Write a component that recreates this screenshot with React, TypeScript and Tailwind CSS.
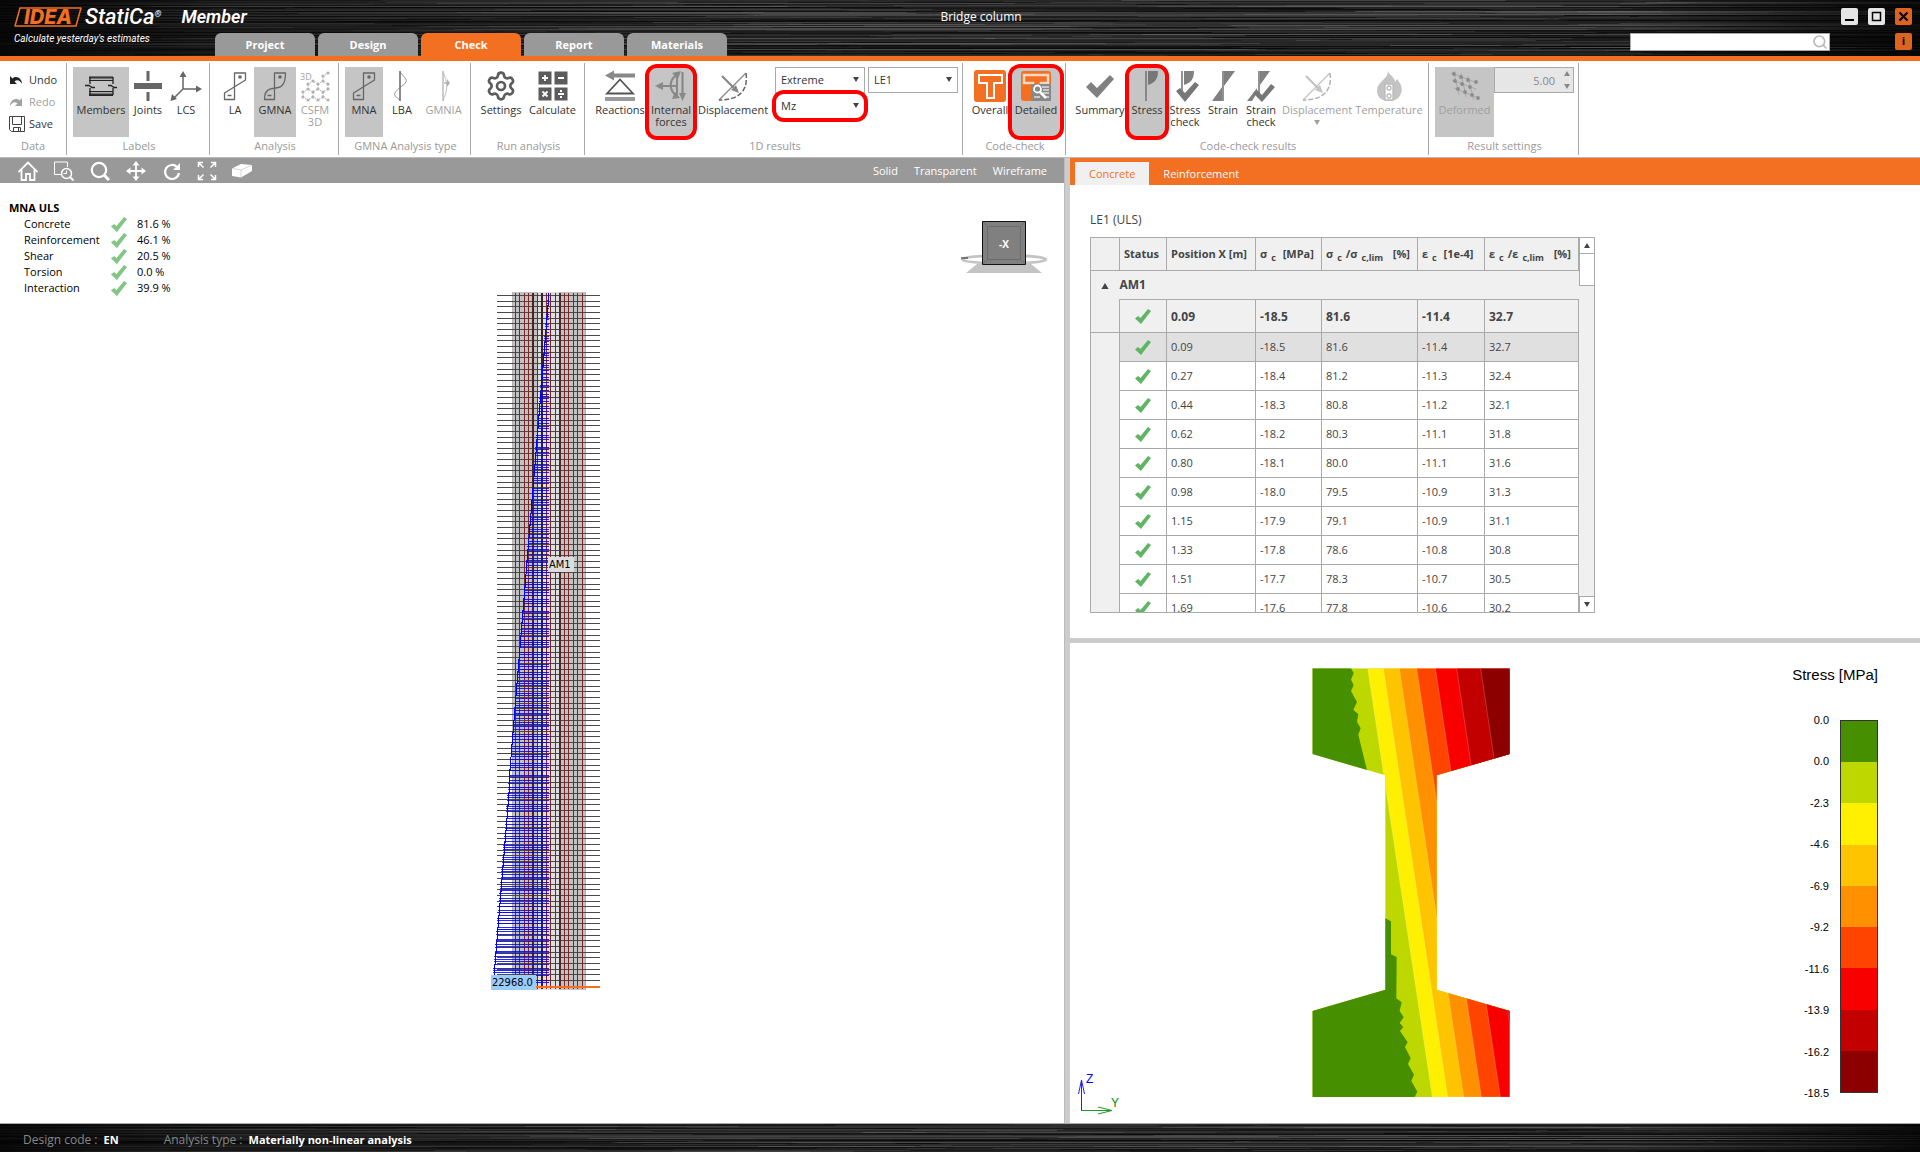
import React, { useState } from 'react';
import { Search, Settings } from 'lucide-react';
import clsx from 'clsx';

interface RibbonItem {
  id: string;
  label: string;
  icon: React.ReactNode;
  width: string;
  active?: boolean;
  disabled?: boolean;
  marked?: boolean;
  caret?: boolean;
}

const TABS = ['Project', 'Design', 'Check', 'Report', 'Materials'];

const CHECKS = [
  { name: 'Concrete', value: '81.6 %' },
  { name: 'Reinforcement', value: '46.1 %' },
  { name: 'Shear', value: '20.5 %' },
  { name: 'Torsion', value: '0.0 %' },
  { name: 'Interaction', value: '39.9 %' },
];

const ROWS = [
  ['0.09', '-18.5', '81.6', '-11.4', '32.7'],
  ['0.27', '-18.4', '81.2', '-11.3', '32.4'],
  ['0.44', '-18.3', '80.8', '-11.2', '32.1'],
  ['0.62', '-18.2', '80.3', '-11.1', '31.8'],
  ['0.80', '-18.1', '80.0', '-11.1', '31.6'],
  ['0.98', '-18.0', '79.5', '-10.9', '31.3'],
  ['1.15', '-17.9', '79.1', '-10.9', '31.1'],
  ['1.33', '-17.8', '78.6', '-10.8', '30.8'],
  ['1.51', '-17.7', '78.3', '-10.7', '30.5'],
  ['1.69', '-17.6', '77.8', '-10.6', '30.2'],
];

const LEGEND_LABELS = ['0.0', '0.0', '-2.3', '-4.6', '-6.9', '-9.2', '-11.6', '-13.9', '-16.2', '-18.5'];
const LEGEND_COLORS = ['#458f00', '#bcd800', '#ffef00', '#ffc400', '#ff9000', '#ff4400', '#f80000', '#c30000', '#8c0000'];

// small deterministic generator so the brushed texture is the same on each render
function makeRandom(seed: number) {
  let s = seed;
  return () => {
    s = (s * 16807) % 2147483647;
    return s / 2147483647;
  };
}

function BrushedMetal({ seed, rows }: { seed: number; rows: number }) {
  const rnd = makeRandom(seed);
  const lines: React.ReactNode[] = [];
  for (let y = 0; y < rows; y++) {
    for (let k = 0; k < 6; k++) {
      const x = rnd() * 1900 - 200;
      const w = 250 + rnd() * 900;
      const light = rnd() > 0.45;
      lines.push(
        <rect
          key={`${y}-${k}`}
          x={x}
          y={y}
          width={w}
          height={1}
          fill={light ? '#ffffff' : '#000000'}
          opacity={light ? 0.03 + rnd() * 0.1 : 0.2 + rnd() * 0.3}
        />
      );
    }
  }
  return (
    <svg className="absolute inset-0 w-full h-full" viewBox={`0 0 1920 ${rows}`} preserveAspectRatio="none" aria-hidden="true">
      <defs>
        <linearGradient id={`shade${seed}`}>
          <stop offset="0" stopColor="#000" stopOpacity="0.8" />
          <stop offset="0.12" stopColor="#000" stopOpacity="0.3" />
          <stop offset="0.4" stopColor="#000" stopOpacity="0" />
          <stop offset="0.85" stopColor="#000" stopOpacity="0.1" />
          <stop offset="1" stopColor="#000" stopOpacity="0.8" />
        </linearGradient>
      </defs>
      <rect width="1920" height={rows} fill="#262626" />
      {lines}
      <rect width="1920" height={rows} fill={`url(#shade${seed})`} />
    </svg>
  );
}

/* ---------- ribbon icons ---------- */

function Ico({ children }: { children: React.ReactNode }) {
  return (
    <svg width="32" height="32" viewBox="0 0 32 32" fill="none" stroke="#666" strokeWidth="1.3" aria-hidden="true">
      {children}
    </svg>
  );
}

const MembersIcon = (
  <Ico>
    <path d="M4 7.5h24M4 25h24" stroke="#222" strokeWidth="2" />
    <path d="M4 10.5h24M4 21.5h24" stroke="#222" strokeWidth="1.2" />
    <path d="M4 8.5h24M4 23.500h24" stroke="#777" />
    <path d="M5 7v7M5 18v7M28 7v7M28 18v7" stroke="#222" />
    <path d="M0 15.500h4l3 2h3M23 15.500h3l3 2h3" stroke="#222" />
  </Ico>
);

const JointsIcon = (
  <Ico>
    <path d="M2 13h28v6H2zM14.500 1h3v10h-3zM14.500 22h3v9h-3z" fill="#666" stroke="none" />
  </Ico>
);

const LcsIcon = (
  <Ico>
    <path d="M13 5v14h14M13 19 3 29" strokeWidth="1.500" />
    <path d="M13 1l3.500 6h-7zM32 19l-6 3.500v-7zM0.500 31l1.500-7 5 5z" fill="#666" stroke="none" />
  </Ico>
);

const LinearIcon = (
  <Ico>
    <path d="M15.500 3h11v7L5.500 23v6.500h10zM15.500 3v27" strokeLinejoin="round" />
    <circle cx="21" cy="7" r="1.800" fill="#666" stroke="none" />
    <path d="M8.500 25.500h4" strokeWidth="1.500" />
  </Ico>
);

const CurvedIcon = (
  <Ico>
    <path d="M15.500 3h11c0 18-10 14-15 16-5 1-6 5-6 10.500h10V3z" strokeLinejoin="round" />
    <circle cx="21" cy="7" r="1.800" fill="#666" stroke="none" />
    <path d="M8.500 25.500h4" strokeWidth="1.500" />
  </Ico>
);

const CsfmIcon = (
  <Ico>
    <path
      d="M4 22l5-3 5 3 5-3 5 3 5-3M4 22v5l5 3 5-3v-5M14 27l5 3 5-3v-5M24 27l5 3M9 19v-5l5-3 5 3v5M19 14l5-3 5 3v5M24 11V6l5-3"
      strokeDasharray="1 1.500"
    />
    {[[4, 22], [4, 27], [9, 30], [14, 27], [14, 22], [19, 30], [24, 27], [24, 22], [29, 30], [9, 19], [9, 14], [14, 11], [19, 14], [19, 19], [24, 11], [29, 14], [29, 19], [24, 6], [29, 3]].map(([x, y]) => (
      <circle key={`${x}-${y}`} cx={x} cy={y} r="1.600" fill="#666" stroke="none" />
    ))}
    <text x="1" y="10" fontSize="9" fill="#444" stroke="none">3D</text>
  </Ico>
);

const LbaIcon = (
  <Ico>
    <path d="M14 1v30" strokeWidth="1.500" />
    <path d="M14 2c8 9 8 9 2 14-10 8-9 9-2 14" strokeWidth="0.700" />
  </Ico>
);

const GmniaIcon = (
  <Ico>
    <path d="M15 1v30" />
    <path d="M15 2c5 11 5 18 0 28" strokeWidth="0.800" />
    <path d="M16 13h4" />
    <path d="M19 9v8l3-4z" fill="#666" stroke="none" />
  </Ico>
);

const CalculateIcon = (
  <Ico>
    <path d="M1.500 1.500h13v13h-13zM17.500 1.500h13v13h-13zM1.500 17.500h13v13h-13zM17.500 17.500h13v13h-13z" fill="#5c5c5c" stroke="none" />
    <path d="M5 8h6M8 5v6M21 8h6M5.500 21.500l5 5M10.500 21.500l-5 5M21 24h6" stroke="#fff" strokeWidth="1.800" />
    <path d="M23 20h2v2h-2zM23 26h2v2h-2z" fill="#fff" stroke="none" />
  </Ico>
);

const ReactionsIcon = (
  <Ico>
    <path d="M1 5.500l9-5v3h21v4H10v3z" fill="#888" stroke="none" />
    <path d="M16 9.500 3 23.500h26z" stroke="#555" strokeWidth="1.800" />
    <path d="M1 27h30v4H1z" fill="#999" stroke="none" />
  </Ico>
);

const ForcesIcon = (
  <Ico>
    <path d="M6 16h9M27.500 2v22" stroke="#888" strokeWidth="2.200" />
    <path d="M22 5c-8 4-9 16 1 22M22 5v22M15 16h7" stroke="#888" strokeWidth="2" />
    <path d="M0 16l8-4v8zM26 1l-3 8-6-6zM31 23l-3.500 8-3.500-8zM17 29l3-7 5 6z" fill="#888" stroke="none" />
  </Ico>
);

const DisplacementIcon = (
  <Ico>
    <path d="M2 30 29 3" strokeWidth="1.200" stroke="#888" />
    <path d="M29 3c2 14-3 27-27 27" strokeDasharray="5 2" strokeWidth="1.500" />
    <path d="M5 6l12 12" stroke="#888" strokeWidth="2.200" />
    <path d="M22 23l-8-3 5-5z" fill="#888" stroke="none" />
  </Ico>
);

const SummaryIcon = (
  <Ico>
    <path d="M2 17l5-5 6 6L26 5l4 4-17 19z" fill="#808080" stroke="none" />
  </Ico>
);

const StressIcon = (
  <Ico>
    <path d="M15 1v30" stroke="#777" strokeWidth="1.600" />
    <path d="M17 1h10c0 9-4 12-10 14z" fill="#777" stroke="none" />
  </Ico>
);

const StressCheckIcon = (
  <Ico>
    <path d="M13 1v24" stroke="#777" strokeWidth="1.600" />
    <path d="M15 1h10c0 9-4 12-10 14z" fill="#808080" stroke="none" />
    <path d="M7 21l4-3 5 5 10-11 4 3-14 17z" fill="#777" stroke="none" />
  </Ico>
);

const StrainIcon = (
  <Ico>
    <path d="M16 1v30" stroke="#777" strokeWidth="1.600" />
    <path d="M17 1h11L17 16zM15 17v14H5z" fill="#808080" stroke="none" />
  </Ico>
);

const StrainCheckIcon = (
  <Ico>
    <path d="M14 1v24" stroke="#777" strokeWidth="1.600" />
    <path d="M15 1h10L15 15zM12 18v5l-5 8H2z" fill="#808080" stroke="none" />
    <path d="M8 23l4-3 5 5 9-11 4 3-13 15z" fill="#777" stroke="none" />
  </Ico>
);

const TemperatureIcon = (
  <Ico>
    <path
      d="M15 1c2 5 7 6 7 11l2-3c4 5 6 9 4 14-1 5-6 8-12 8S4 28 4 21c0-5 3-8 6-11 3-3 5-5 5-9z"
      fill="#888"
      stroke="none"
    />
    <path d="M12 14h8v16h-8z" fill="#fff" stroke="#777" />
    <circle cx="16" cy="18" r="2" stroke="#777" />
    <circle cx="16" cy="26" r="2" stroke="#777" />
  </Ico>
);

const DeformedIcon = (
  <Ico>
    <path d="M5 1c2 12 3 15 5 24M12 3c2 10 3 13 5 24M19 6c2 9 3 13 6 24M2 3l24 9M3 10l24 9M5 18l24 10" strokeWidth="0.600" />
    {[[5, 4], [12, 7], [19, 10], [6, 11], [13, 14], [21, 17], [9, 19], [16, 22], [23, 25], [27, 12], [29, 28]].map(([x, y]) => (
      <circle key={`${x}-${y}`} cx={x} cy={y} r="1.900" fill="#555" stroke="none" />
    ))}
  </Ico>
);

const OverallIcon = (
  <Ico>
    <rect width="32" height="32" rx="3" fill="#f36f21" stroke="none" />
    <path d="M5 5h23v8h-8v15h-7V13H5z" stroke="#fff" strokeWidth="2" />
  </Ico>
);

const DetailedIcon = (
  <Ico>
    <rect x="1" y="1" width="30" height="30" rx="3" fill="#f36f21" stroke="none" />
    <path d="M4 5h24v8h-7v10h-8V13H4z" stroke="#f6d8c6" strokeWidth="2.500" />
    <rect x="11" y="14" width="20" height="17" fill="#888" stroke="none" />
    <path d="M22 17h7M23 20h6M23 23h6M14 27h6M25 27h4" stroke="#ddd" />
    <circle cx="17.500" cy="19" r="3.500" stroke="#fff" strokeWidth="1.800" />
    <path d="M20 22l6 6" stroke="#fff" strokeWidth="2.500" />
  </Ico>
);

const GROUPS: { title: string; items: RibbonItem[] }[] = [
  {
    title: 'Labels',
    items: [
      { id: 'members', label: 'Members', icon: MembersIcon, width: 'w-14', active: true },
      { id: 'joints', label: 'Joints', icon: JointsIcon, width: 'w-[38px]' },
      { id: 'lcs', label: 'LCS', icon: LcsIcon, width: 'w-[38px]' },
    ],
  },
  {
    title: 'Analysis',
    items: [
      { id: 'la', label: 'LA', icon: LinearIcon, width: 'w-[38px]' },
      { id: 'gmna', label: 'GMNA', icon: CurvedIcon, width: 'w-[42px]', active: true },
      { id: 'csfm', label: 'CSFM 3D', icon: CsfmIcon, width: 'w-[38px]', disabled: true },
    ],
  },
  {
    title: 'GMNA Analysis type',
    items: [
      { id: 'mna', label: 'MNA', icon: LinearIcon, width: 'w-[38px]', active: true },
      { id: 'lba', label: 'LBA', icon: LbaIcon, width: 'w-[38px]' },
      { id: 'gmnia', label: 'GMNIA', icon: GmniaIcon, width: 'w-[45px]', disabled: true },
    ],
  },
  {
    title: 'Run analysis',
    items: [
      { id: 'settings', label: 'Settings', icon: <Settings size={32} strokeWidth={2} color="#5c5c5c" />, width: 'w-12' },
      { id: 'calculate', label: 'Calculate', icon: CalculateIcon, width: 'w-[55px]' },
    ],
  },
];

const RESULT_ITEMS: RibbonItem[] = [
  { id: 'reactions', label: 'Reactions', icon: ReactionsIcon, width: 'w-14' },
  { id: 'forces', label: 'Internal forces', icon: ForcesIcon, width: 'w-[46px]', active: true, marked: true },
  { id: 'displacement', label: 'Displacement', icon: DisplacementIcon, width: 'w-[78px]' },
];

const CODE_ITEMS: RibbonItem[] = [
  { id: 'overall', label: 'Overall', icon: OverallIcon, width: 'w-[42px]' },
  { id: 'detailed', label: 'Detailed', icon: DetailedIcon, width: 'w-[50px]', active: true, marked: true },
];

const CHECK_ITEMS: RibbonItem[] = [
  { id: 'summary', label: 'Summary', icon: SummaryIcon, width: 'w-14' },
  { id: 'stress', label: 'Stress', icon: StressIcon, width: 'w-[38px]', active: true, marked: true },
  { id: 'stress-check', label: 'Stress check', icon: StressCheckIcon, width: 'w-[38px]' },
  { id: 'strain', label: 'Strain', icon: StrainIcon, width: 'w-[38px]' },
  { id: 'strain-check', label: 'Strain check', icon: StrainCheckIcon, width: 'w-[38px]' },
  { id: 'cc-displacement', label: 'Displacement', icon: DisplacementIcon, width: 'w-[74px]', disabled: true, caret: true },
  { id: 'temperature', label: 'Temperature', icon: TemperatureIcon, width: 'w-[70px]', disabled: true },
];

function RedMark() {
  return <span className="pointer-events-none absolute -inset-[3px] z-10 rounded-xl border-4 border-[#ff0000]" />;
}

function RibbonButton({ item }: { item: RibbonItem }) {
  return (
    <button
      type="button"
      disabled={item.disabled}
      className={clsx(
        'relative flex h-[70px] shrink-0 flex-col items-center pt-[3px]',
        item.width,
        item.active && 'bg-[#c5c5c5]'
      )}
    >
      <span className={clsx('h-8', item.disabled && 'opacity-50')}>{item.icon}</span>
      <span className={clsx('mt-0.5 whitespace-nowrap text-center leading-3', item.disabled ? 'text-[#a0a0a0]' : 'text-[#333]')}>
        {item.label.split(' ').map(part => <span key={part} className="block">{part}</span>)}
      </span>
      {item.caret && <Caret className="mt-1 text-[#a0a0a0]" />}
      {item.marked && <RedMark />}
    </button>
  );
}

function Group({ title, children, className }: { title: string; children: React.ReactNode; className?: string }) {
  return (
    <section className={clsx('flex h-[92px] shrink-0 flex-col justify-between border-r border-[#aaa] pb-px pt-1', className ?? 'pl-1.5 pr-1')}>
      <div className="flex">{children}</div>
      <h2 className="text-center leading-4 text-[#999]">{title}</h2>
    </section>
  );
}

function Caret({ up, className }: { up?: boolean; className?: string }) {
  return (
    <svg width="6" height="5" viewBox="0 0 6 5" className={className} aria-hidden="true">
      <path d={up ? 'M0 5h6L3 0z' : 'M0 0h6L3 5z'} fill="currentColor" />
    </svg>
  );
}

function Dropdown({ label, options, marked }: { label: string; options: string[]; marked?: boolean }) {
  return (
    <div className="relative h-[26px] w-[90px]">
      <select aria-label={label} className="h-full w-full appearance-none border border-[#aaa] bg-white pl-[5px] pr-4 text-[#333] outline-none">
        {options.map(o => <option key={o}>{o}</option>)}
      </select>
      <Caret className="pointer-events-none absolute right-1.5 top-2.5 text-[#444]" />
      {marked && <RedMark />}
    </div>
  );
}

function Header({ tab, onTab }: { tab: string; onTab: (t: string) => void }) {
  return (
    <header className="relative border-b-[5px] border-[#f36f21] bg-[#111] text-white">
      <BrushedMetal seed={77} rows={56} />
      <div className="relative flex h-[33px]">
        <div className="flex w-[300px] items-center pl-3.5 font-[Roboto] italic">
          <div className="relative mr-[3px] h-5 w-[68px] text-center">
            <svg className="absolute inset-0" width="68" height="20" viewBox="0 0 68 20" fill="none" aria-hidden="true">
              <path d="M6 1h61l-5 18H1z" stroke="#f36f21" strokeWidth="1.500" strokeLinejoin="round" />
            </svg>
            <span className="relative font-[Inter] text-xl font-extrabold leading-5 text-[#f36f21]">IDEA</span>
          </div>
          <span className="text-[22px] font-medium leading-5">StatiCa</span>
          <span className="self-start pt-2 text-[9px] leading-3">®</span>
          <span className="pl-5 text-lg font-semibold leading-5">Member</span>
        </div>
        <h1 className="flex-1 pl-6 pt-[9px] text-center text-xs leading-4">Bridge column</h1>
        <div className="flex w-[282px] justify-end gap-2.5 pr-2 pt-2">
          <button type="button" aria-label="Minimize" className="flex size-[17px] justify-center rounded-xs bg-[#e6e6e6]">
            <svg width="17" height="17"><path d="M4 12h9" stroke="#000" strokeWidth="2" /></svg>
          </button>
          <button type="button" aria-label="Maximize" className="flex size-[17px] justify-center rounded-xs bg-[#e6e6e6]">
            <svg width="17" height="17"><path d="M4.500 4.500h8v8h-8z" fill="none" stroke="#000" strokeWidth="1.500" /></svg>
          </button>
          <button type="button" aria-label="Close" className="flex size-[17px] justify-center rounded-xs bg-[#dc6420]">
            <svg width="17" height="17"><path d="M4.500 4.500l8 8M12.500 4.500l-8 8" stroke="#000" strokeWidth="2" /></svg>
          </button>
        </div>
      </div>
      <div className="relative flex h-[23px]">
        <p className="w-[215px] pl-3.5 font-[Roboto] text-[10px] italic leading-3">Calculate yesterday&apos;s estimates</p>
        <nav className="flex gap-[3px]">
          {TABS.map(t => (
            <button
              key={t}
              type="button"
              onClick={() => onTab(t)}
              className={clsx('w-[100px] rounded-t-md pt-0.5 font-bold', t === tab ? 'bg-[#f36f21]' : 'bg-[#999]')}
            >
              {t}
            </button>
          ))}
        </nav>
        <div className="relative ml-auto mr-[65px] h-[18px] w-[200px]">
          <input type="search" aria-label="Search" className="h-full w-full border border-[#aaa] bg-white px-1 text-black outline-none" />
          <Search size={16} color="#bbb" strokeWidth={2.5} className="absolute right-0.5 top-px" />
        </div>
        <button type="button" aria-label="Info" className="mr-2 flex size-[17px] items-center justify-center rounded-xs bg-[#dc6420] font-bold text-black">
          i
        </button>
      </div>
    </header>
  );
}

function Ribbon() {
  return (
    <div className="flex border-b border-[#bbb] pb-0.5 pt-0.5">
      <section className="flex h-[92px] w-[67px] shrink-0 flex-col justify-between border-r border-[#aaa] pb-px pl-[9px] pt-1.5 text-[#333]">
        <div className="flex flex-col">
          <button type="button" className="flex h-[22px] items-center gap-1.5">
            <svg width="14" height="12" viewBox="0 0 14 12"><path d="M1 2v8h7L5.500 7.500C8 5 11 6 13 10c0-6-6-9-9.500-5.500z" fill="#222" /></svg>
            Undo
          </button>
          <button type="button" disabled className="flex h-[22px] items-center gap-1.5 text-[#a0a0a0]">
            <svg width="14" height="12" viewBox="0 0 14 12"><path d="M13 2v8H6l2.500-2.500C6 5 3 6 1 10c0-6 6-9 9.500-5.500z" fill="#a0a0a0" /></svg>
            Redo
          </button>
          <button type="button" className="flex h-[22px] items-center gap-1">
            <svg width="16" height="16" viewBox="0 0 16 16" fill="none" stroke="#444"><path d="M.500.500h15v15h-13l-2-2zM3.500.500v8h9v-8M4.500 15.500v-4h7v4M9.500 12v3.500" /></svg>
            Save
          </button>
        </div>
        <h2 className="-ml-[9px] text-center leading-4 text-[#999]">Data</h2>
      </section>

      {GROUPS.map(g => (
        <Group key={g.title} title={g.title}>
          {g.items.map(i => <RibbonButton key={i.id} item={i} />)}
        </Group>
      ))}

      <Group title="1D results" className="pl-[7px] pr-1">
        {RESULT_ITEMS.map(i => <RibbonButton key={i.id} item={i} />)}
        <div className="ml-[3px] grid grid-cols-2 content-start gap-x-[3px]">
          <Dropdown label="Result location" options={['Extreme', 'Section']} />
          <Dropdown label="Load effect" options={['LE1', 'LE2']} />
          <Dropdown label="Internal force" options={['Mz', 'My', 'N', 'Vy', 'Vz']} marked />
        </div>
      </Group>

      <Group title="Code-check">
        {CODE_ITEMS.map(i => <RibbonButton key={i.id} item={i} />)}
      </Group>

      <Group title="Code-check results">
        {CHECK_ITEMS.map(i => <RibbonButton key={i.id} item={i} />)}
      </Group>

      <Group title="Result settings">
        <RibbonButton item={{ id: 'deformed', label: 'Deformed', icon: DeformedIcon, width: 'w-[59px]', active: true, disabled: true }} />
        <div className="relative h-[26px] w-20">
          <input aria-label="Deformation scale" disabled defaultValue="5.00" className="h-full w-full border border-[#aaa] bg-[#e6e6e6] pr-[18px] text-right text-[#888]" />
          <Caret up className="absolute right-1 top-1 text-[#888]" />
          <Caret className="absolute bottom-1 right-1 text-[#888]" />
        </div>
      </Group>
    </div>
  );
}

function ViewToolbar() {
  const cls = 'flex h-6 w-9 items-center justify-center';
  return (
    <div className="flex h-[25px] items-center bg-[#999] pl-2.5 pr-[17px] pt-px text-white">
      <button type="button" aria-label="Home" className={cls}>
        <svg width="20" height="20" viewBox="0 0 20 20" fill="none" stroke="#fff" strokeWidth="1.800"><path d="M.500 11 10 1.500 19.500 11M3.500 9v10h4.500v-6h4v6h4.500V9" /></svg>
      </button>
      <button type="button" aria-label="Zoom window" className={cls}>
        <svg width="20" height="20" viewBox="0 0 20 20" fill="none" stroke="#fff"><path d="M7 13.500H.500V1h13v5" /><circle cx="12.500" cy="12.500" r="5" strokeWidth="1.500" /><path d="M16 16l3.500 3.500" strokeWidth="2" /><path d="M12.500 9.500v3h-3" /></svg>
      </button>
      <button type="button" aria-label="Zoom" className={cls}>
        <svg width="20" height="20" viewBox="0 0 20 20" fill="none" stroke="#fff"><circle cx="9" cy="9" r="7.200" strokeWidth="2.200" /><path d="M14 14l5 5" strokeWidth="3" /></svg>
      </button>
      <button type="button" aria-label="Pan" className={cls}>
        <svg width="20" height="20" viewBox="0 0 20 20" fill="#fff" stroke="#fff"><path d="M10 3v14M3 10h14" strokeWidth="1.800" /><path d="M10 0l3.500 4.500h-7zM10 20l3.500-4.500h-7zM0 10l4.500-3.500v7zM20 10l-4.500-3.500v7z" stroke="none" /></svg>
      </button>
      <button type="button" aria-label="Rotate" className={cls}>
        <svg width="20" height="20" viewBox="0 0 20 20" fill="none" stroke="#fff"><path d="M15 6a7 7 0 1 0 2 6" strokeWidth="2.200" /><path d="M18 2v7h-7z" fill="#fff" stroke="none" /></svg>
      </button>
      <button type="button" aria-label="Zoom all" className="flex h-6 w-[34px] items-center justify-center">
        <svg width="20" height="20" viewBox="0 0 20 20" fill="none" stroke="#fff" strokeWidth="1.500"><path d="M6 1.500H1.500V6M1.500 1.500l5 5M14 1.500h4.500V6M18.500 1.500l-5 5M6 18.500H1.500V14M1.500 18.500l5-5M14 18.500h4.500V14M18.500 18.500l-5-5" /></svg>
      </button>
      <button type="button" aria-label="View solid" className={cls}>
        <svg width="20" height="14" viewBox="0 0 20 14"><path d="M0 4.500 9 0l11 1v6L9 13.500 0 12z" fill="#fff" /><path d="M0 4.500l9 1.500 11-5M9 6v7.500" fill="none" stroke="#bbb" strokeWidth="0.600" /></svg>
      </button>
      <div className="ml-auto flex gap-4">
        <button type="button">Solid</button>
        <button type="button">Transparent</button>
        <button type="button">Wireframe</button>
      </div>
    </div>
  );
}

function Tick({ color }: { color: string }) {
  return (
    <svg width="16" height="15" viewBox="0 0 16 15" aria-hidden="true">
      <path d="M0 9.500 3 7l2.500 2L13 0l3 2L6 15z" fill={color} />
    </svg>
  );
}

// column elevation: stirrups, rebars and the moment diagram
function MemberDrawing() {
  const stirrups = Array.from({ length: 123 }, (_, i) => Math.round(295 + i * 5.66));
  const rebars = [515, 519, 524, 528, 537, 546, 550, 555, 564, 568, 573, 577, 582];
  const edge = (y: number) => Math.round(548 - ((y - 292) / 681) * 55);
  const gaps = [3, 3, 2, 3, 4, 2, 2, 3, 5, 2, 3, 3, 4, 2];
  const forceLines: number[] = [];
  for (let y = 297, i = 0; y < 985; i++) {
    forceLines.push(y);
    y += gaps[i % gaps.length];
  }
  const steps = Array.from({ length: 56 }, (_, i) => 293 + i * 12.2);
  return (
    <svg width="144" height="702" viewBox="460 290 144 702" shapeRendering="crispEdges" role="img" aria-label="Column elevation">
      <rect x="512" y="292" width="74" height="698" fill="#c2c2c2" />
      <rect x="538" y="292" width="21" height="698" fill="#dedede" />
      <rect x="512" y="292" width="1" height="698" fill="#b0b0b0" />
      <rect x="585" y="292" width="1" height="698" fill="#b0b0b0" />
      {stirrups.map(y => <rect key={y} x="497" y={y} width="103" height="1" fill="#4a4a4a" />)}
      {rebars.map(x => <rect key={x} x={x} y="293" width="1" height="696" fill="#7a2424" />)}
      <rect x="532" y="293" width="2" height="696" fill="#4d2222" />
      <rect x="541" y="293" width="2" height="696" fill="#3d2020" />
      <rect x="559" y="293" width="2" height="696" fill="#4d2a2a" />
      {forceLines.map(y => <rect key={y} x={edge(y)} y={y} width={549 - edge(y)} height="1" fill="#0000ff" opacity="0.85" />)}
      {steps.map(y => <rect key={y} x={edge(y)} y={y} width="1" height="13" fill="#0000ff" />)}
      <rect x="536" y="986" width="64" height="2" fill="#f36f21" />
      <g fontFamily="'DejaVu Sans Condensed', 'DejaVu Sans', sans-serif" fontSize="11" fill="#000">
        <rect x="548" y="557" width="26" height="15" fill="#dcdcdc" />
        <text x="549" y="568">AM1</text>
        <rect x="491" y="975" width="45" height="15" fill="#99ccff" />
        <text x="492" y="986">22968.0</text>
      </g>
    </svg>
  );
}

function ViewCube() {
  return (
    <svg width="88" height="56" viewBox="0 0 88 56" className="absolute right-4 top-[37px]" role="img" aria-label="View cube">
      <path d="M17 44h54l11 9H6z" fill="#c4c4c4" />
      <ellipse cx="44" cy="39.500" rx="42" ry="4" fill="none" stroke="#c4c4c4" strokeWidth="2.500" />
      <path d="M1 38h7" stroke="#222" />
      <rect x="22.500" y="1.500" width="43" height="43" fill="#808080" stroke="#111" />
      <path d="M27.500 6.500h33v33h-33zM22.500 1.500l5 5M65.500 1.500l-5 5M22.500 44.500l5-5M65.500 44.500l-5-5" fill="none" stroke="#6c6c6c" />
      <text x="44" y="28" textAnchor="middle" fontSize="10" fontWeight="700" fill="#fff">-X</text>
    </svg>
  );
}

function ModelView() {
  return (
    <div className="flex min-w-0 flex-col">
      <ViewToolbar />
      <div className="relative flex flex-1 items-start justify-center pt-[107px]">
        <div className="absolute left-[9px] top-[17px] leading-4 text-black">
          <h2 className="font-bold">MNA ULS</h2>
          <ul className="pl-[15px]">
            {CHECKS.map(c => (
              <li key={c.name} className="flex items-center">
                <span className="w-[87px]">{c.name}</span>
                <Tick color="#82c585" />
                <span className="pl-2.5">{c.value}</span>
              </li>
            ))}
          </ul>
        </div>
        <ViewCube />
        <MemberDrawing />
      </div>
    </div>
  );
}

const Sub = ({ children }: { children: React.ReactNode }) => (
  <span className="relative top-[3px] px-1 text-[9px]">{children}</span>
);

const CELL = 'border border-[#aaa] px-1 pt-px';

function ResultTable() {
  return (
    <div className="flex h-[376px] w-[505px] overflow-hidden border border-[#aaa] text-[#444]">
      <div className="flex-1 overflow-hidden">
        <table className="-ml-px -mt-px w-[489px] table-fixed border-collapse">
          <colgroup>
            <col className="w-[29px]" />
            <col className="w-[47px]" />
            <col className="w-[89px]" />
            <col className="w-[66px]" />
            <col className="w-[96px]" />
            <col className="w-[67px]" />
            <col className="w-[94px]" />
          </colgroup>
          <thead className="bg-[#f0f0f0] text-left">
            <tr className="h-[33px] whitespace-nowrap">
              <th className={CELL} />
              <th className={CELL}>Status</th>
              <th className={CELL}>Position X [m]</th>
              <th className={CELL}>σ<Sub>c</Sub> [MPa]</th>
              <th className={CELL}>σ<Sub>c</Sub>/σ<Sub>c,lim</Sub> &nbsp;[%]</th>
              <th className={CELL}>ε<Sub>c</Sub> [1e-4]</th>
              <th className={CELL}>ε<Sub>c</Sub>/ε<Sub>c,lim</Sub> &nbsp;[%]</th>
            </tr>
          </thead>
          <tbody>
            <tr className="h-[29px] bg-[#f0f0f0] text-xs font-bold">
              <td className="text-center">
                <button type="button" aria-label="Collapse AM1" className="align-middle"><Caret up className="h-1.5 w-2" /></button>
              </td>
              <td colSpan={6}>AM1</td>
            </tr>
            <tr className="h-[33px] bg-[#f0f0f0] text-xs font-bold">
              <td className="border-b border-[#aaa]" />
              <td className={CELL}><span className="flex justify-center"><Tick color="#5fb564" /></span></td>
              {ROWS[0].map((v, i) => <td key={i} className={CELL}>{v}</td>)}
            </tr>
            {ROWS.map((row, r) => (
              <tr key={row[0]} className={clsx('h-[29px]', r === 0 ? 'bg-[#e0e0e0]' : 'bg-white')}>
                <td className="border-r border-[#aaa] bg-[#f0f0f0]" />
                <td className={CELL}><span className="flex justify-center"><Tick color="#5fb564" /></span></td>
                {row.map((v, i) => <td key={i} className={CELL}>{v}</td>)}
              </tr>
            ))}
          </tbody>
        </table>
      </div>
      <div className="flex w-[15px] flex-col bg-[#f0f0f0]">
        <button type="button" aria-label="Scroll up" className="flex h-4 items-center justify-center border-b border-l border-[#aaa] bg-white"><Caret up /></button>
        <div className="h-8 border-b border-l border-[#aaa] bg-white" />
        <button type="button" aria-label="Scroll down" className="mt-auto flex h-4 items-center justify-center border-l border-t border-[#aaa] bg-white"><Caret /></button>
      </div>
    </div>
  );
}

function ResultsPane() {
  const [tab, setTab] = useState('Concrete');
  return (
    <div className="h-[480px] shrink-0">
      <div className="flex h-[27px] bg-[#f36f21] pl-[5px] pt-1">
        {['Concrete', 'Reinforcement'].map(t => (
          <button
            key={t}
            type="button"
            onClick={() => setTab(t)}
            className={clsx('px-3.5 pt-0.5', t === tab ? 'bg-[#f0f0f0] text-[#f36f21]' : 'text-white')}
          >
            {t}
          </button>
        ))}
      </div>
      <div className="pl-5 pt-[27px]">
        <h2 className="mb-[9px] text-xs leading-4 text-[#444]">LE1 (ULS)</h2>
        <ResultTable />
      </div>
    </div>
  );
}

function SectionDrawing() {
  // [x at the top edge, x at the bottom edge] for each band start
  const bands = [
    [233, 427],
    [280, 473],
    [328, 521],
    [380, 574],
    [436, 631],
    [500, 692],
    [572, 764],
  ];
  return (
    <svg width="198" height="430" viewBox="66 55 594 1290" role="img" aria-label="Stress in cross-section">
      <defs>
        <clipPath id="section">
          <path d="M67 56H659V313L440 377V1020L659 1084V1342H67V1084L286 1020V377L67 313Z" />
        </clipPath>
      </defs>
      <g clipPath="url(#section)">
        <rect x="66" y="55" width="594" height="1290" fill="#bcd800" />
        <path d="M60 50H183V56L191 70 183 90 191 106 183 124 201 157 190 180 205 194 201 216 212 236 205 255 231 362 60 400Z" fill="#458f00" />
        <path
          d="M286 806L303 815V914L320 922 319 1046 335 1058 329 1084 341 1103 329 1120 340 1132 330 1144 353 1178 345 1192 362 1226 354 1243 372 1275 364 1294 382 1326 374 1342H60V806Z"
          fill="#458f00"
        />
        {bands.map(([a, b], i) => (
          <path key={a} d={`M${a} 56L${b} 1342H900V56Z`} fill={LEGEND_COLORS[i + 2]} stroke="#ffffff" strokeOpacity="0.3" strokeWidth="2" />
        ))}
      </g>
    </svg>
  );
}

function StressPane() {
  return (
    <div className="relative flex flex-1 justify-between pl-[28.5%] pr-[42px] font-['Liberation_Sans',Arial,sans-serif] text-black">
      <div className="pt-[25px]"><SectionDrawing /></div>
      <div className="flex flex-col items-end pt-[23px]">
        <h2 className="text-[15px] leading-[18px]">Stress [MPa]</h2>
        <div className="mt-[30px] flex gap-[11px]">
          <ol className="flex h-[385px] flex-col justify-between text-right leading-3">
            {LEGEND_LABELS.map((l, i) => <li key={i}>{l}</li>)}
          </ol>
          <div className="my-1.5 flex w-[38px] flex-col border border-[#333]">
            {LEGEND_COLORS.map(c => <div key={c} className="flex-1" style={{ backgroundColor: c }} />)}
          </div>
        </div>
      </div>
      <svg width="50" height="46" viewBox="0 0 50 46" className="absolute bottom-1.5 left-1.5" fill="none" role="img" aria-label="Axes Y and Z">
        <path d="M5.500 39V9M2.500 23l3-14 3 14" stroke="#2222ff" />
        <path d="M5 39.500h29M22 36l14 3.500-14 3.500" stroke="#229922" />
        <text x="10" y="12" fontSize="12" fill="#0000ff">Z</text>
        <text x="35" y="36" fontSize="12" fill="#008800">Y</text>
      </svg>
    </div>
  );
}

export default function App() {
  const [tab, setTab] = useState('Check');

  return (
    <div className="flex min-h-screen flex-col overflow-hidden bg-white font-['Open_Sans',sans-serif] text-[11px]">
      <Header tab={tab} onTab={setTab} />
      <Ribbon />
      <main className="grid flex-1 grid-cols-[1064fr_6px_850fr]">
        <ModelView />
        <div className="border-l border-[#bbb] bg-[#ccc]" />
        <div className="flex min-w-0 flex-col">
          <ResultsPane />
          <div className="h-[5px] bg-[#ccc]" />
          <StressPane />
        </div>
      </main>
      <footer className="relative h-[29px] border-t border-[#aaa] bg-[#111]">
        <BrushedMetal seed={4211} rows={28} />
        <dl className="relative flex pl-[23px] pt-2 leading-4">
          <dt className="text-xs text-[#888]">Design code :</dt>
          <dd className="pl-1.5 font-bold text-white">EN</dd>
          <dt className="pl-[45px] text-xs text-[#888]">Analysis type :</dt>
          <dd className="pl-1.5 font-bold text-white">Materially non-linear analysis</dd>
        </dl>
      </footer>
    </div>
  );
}
